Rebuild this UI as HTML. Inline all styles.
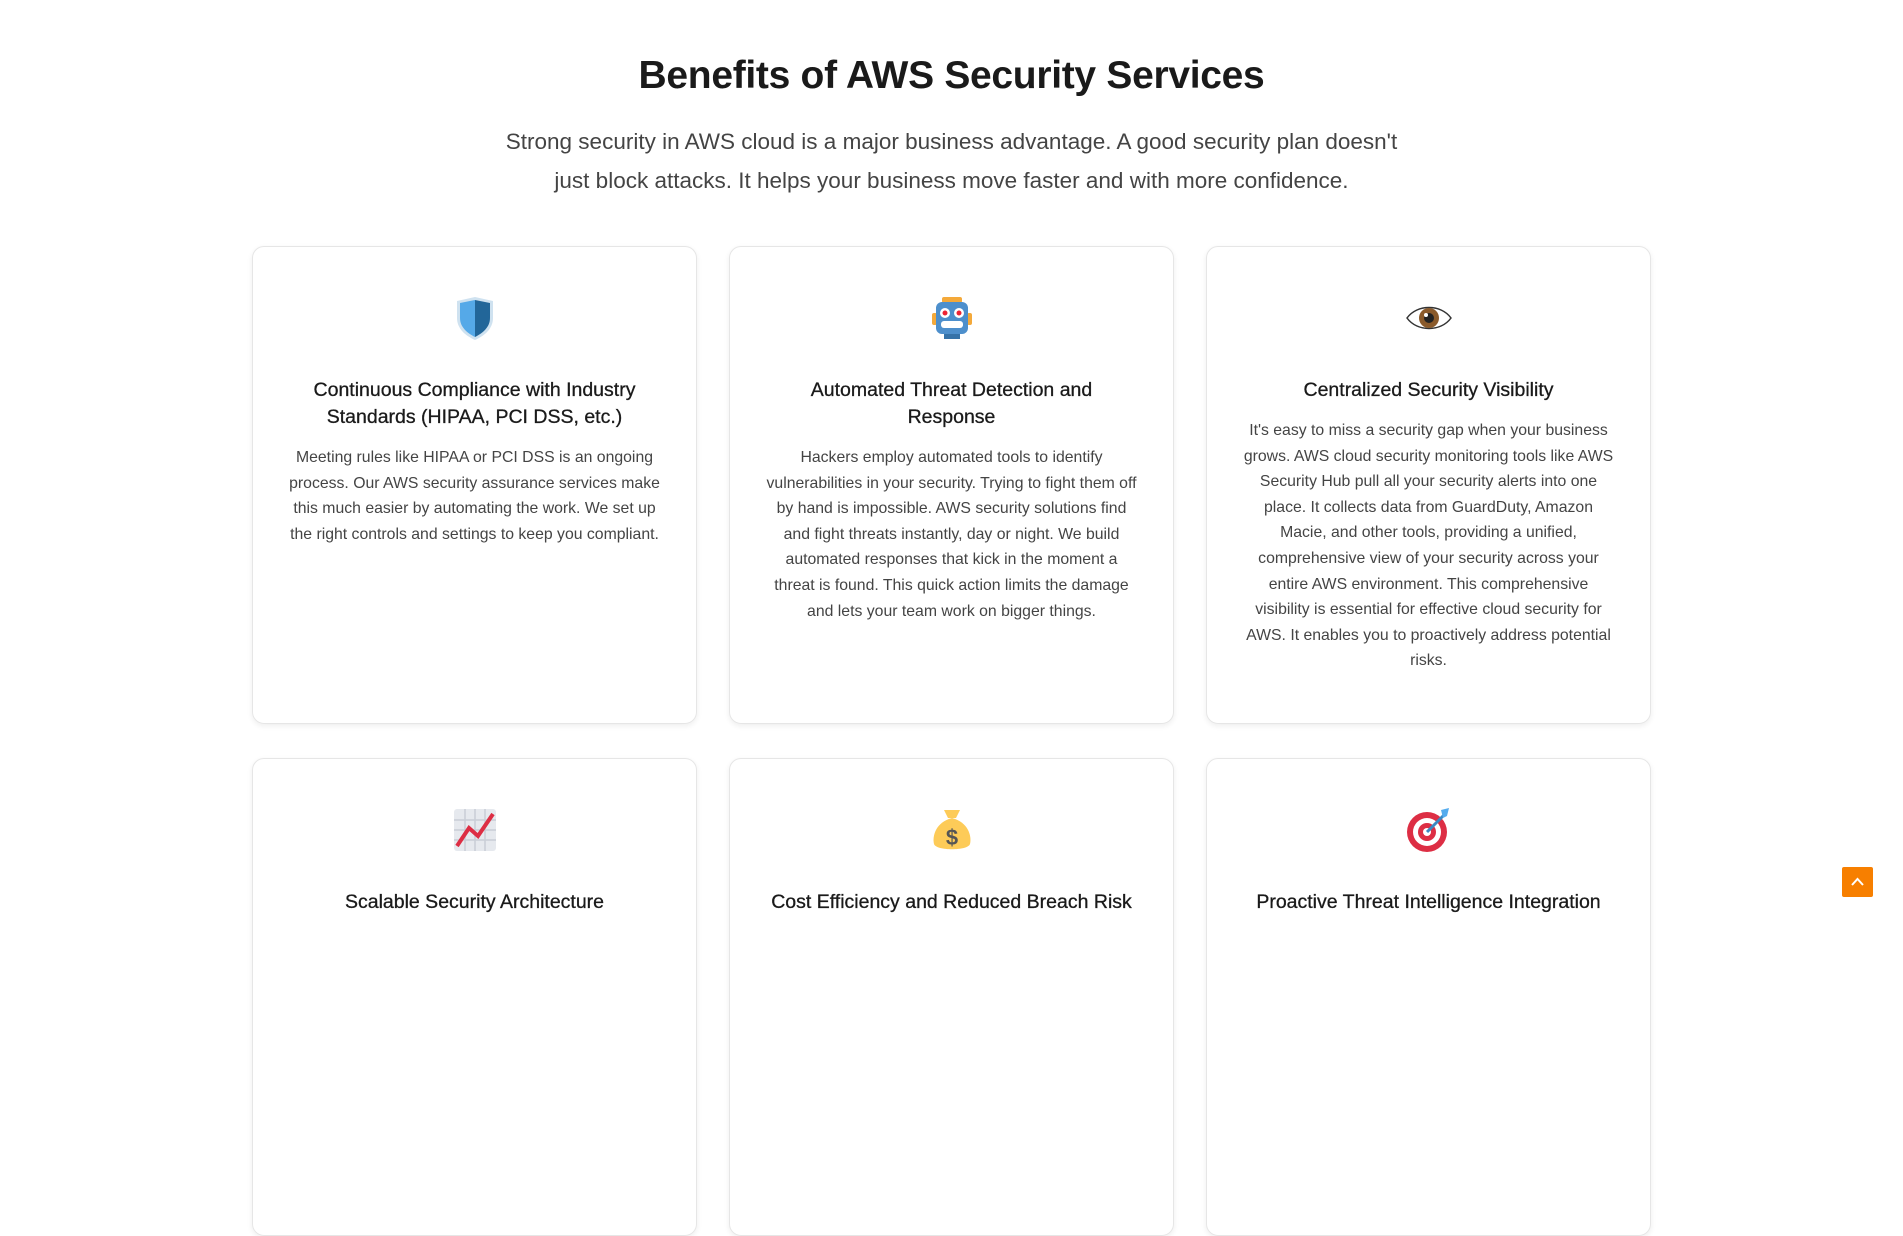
<!DOCTYPE html>
<html><head><meta charset="utf-8"><style>
*{box-sizing:border-box;margin:0;padding:0}
body{width:1903px;height:927px;overflow:hidden;background:#fff;font-family:"Liberation Sans",sans-serif;color:#222;position:relative}
h1{position:absolute;top:54px;left:0;width:1903px;text-align:center;font-size:39px;font-weight:bold;color:#1a1a1a;letter-spacing:-0.3px}
.sub{position:absolute;top:122px;left:490px;width:923px;text-align:center;font-size:22.5px;line-height:39px;color:#444}
.card{position:absolute;width:445px;height:478px;border:1px solid #e6e6e6;border-radius:12px;box-shadow:0 2px 6px rgba(0,0,0,.07);text-align:center;padding:0 34px}
.card svg{position:absolute;top:47px;left:198px;width:48px;height:48px}
.card h3{margin-top:130px;padding:0 16px;font-size:19.5px;line-height:27px;font-weight:normal;color:#1a1a1a;-webkit-text-stroke:0.3px #1a1a1a}
.card p{margin-top:14px;font-size:15.8px;line-height:25.6px;color:#444}
.top{position:absolute;left:1842px;top:867px;width:31px;height:30px;background:#f77f00;border-radius:2px}
</style></head><body>
<h1>Benefits of AWS Security Services</h1>
<div class="sub">Strong security in AWS cloud is a major business advantage. A good security plan doesn't just block attacks. It helps your business move faster and with more confidence.</div>

<div class="card" style="left:252px;top:246px">
<svg viewBox="0 0 48 48"><path d="M24 3 L42 7 V24 C42 35 33 42 24 46 C15 42 6 35 6 24 V7 Z" fill="#cfe2f0"/><path d="M24 6 L9 9 V24 C9 33 16 39 24 43 Z" fill="#55a9e8"/><path d="M24 6 L39 9 V24 C39 33 32 39 24 43 Z" fill="#226699"/></svg>
<h3>Continuous Compliance with Industry Standards (HIPAA, PCI DSS, etc.)</h3>
<p>Meeting rules like HIPAA or PCI DSS is an ongoing process. Our AWS security assurance services make this much easier by automating the work. We set up the right controls and settings to keep you compliant.</p>
</div>

<div class="card" style="left:729px;top:246px">
<svg viewBox="0 0 48 48"><rect x="14" y="3" width="20" height="6" rx="2" fill="#f4a93a"/><rect x="4" y="19" width="5" height="12" rx="2" fill="#f4a93a"/><rect x="39" y="19" width="5" height="12" rx="2" fill="#f4a93a"/><rect x="8" y="8" width="32" height="32" rx="6" fill="#4d8fcc"/><circle cx="17" cy="19" r="5" fill="#fff"/><circle cx="31" cy="19" r="5" fill="#fff"/><circle cx="17" cy="19" r="2.5" fill="#e23"/><circle cx="31" cy="19" r="2.5" fill="#e23"/><rect x="13" y="27" width="22" height="7" rx="3" fill="#fff"/><rect x="16" y="40" width="16" height="5" fill="#3572a8"/></svg>
<h3>Automated Threat Detection and Response</h3>
<p>Hackers employ automated tools to identify vulnerabilities in your security. Trying to fight them off by hand is impossible. AWS security solutions find and fight threats instantly, day or night. We build automated responses that kick in the moment a threat is found. This quick action limits the damage and lets your team work on bigger things.</p>
</div>

<div class="card" style="left:1206px;top:246px">
<svg viewBox="0 0 48 48"><path d="M2 24 C12 10 36 10 46 24 C36 38 12 38 2 24Z" fill="#fff" stroke="#333" stroke-width="1.5"/><circle cx="24" cy="24" r="10" fill="#8a5a2b"/><circle cx="24" cy="24" r="5" fill="#222"/><circle cx="21" cy="21" r="2" fill="#fff"/></svg>
<h3>Centralized Security Visibility</h3>
<p>It's easy to miss a security gap when your business grows. AWS cloud security monitoring tools like AWS Security Hub pull all your security alerts into one place. It collects data from GuardDuty, Amazon Macie, and other tools, providing a unified, comprehensive view of your security across your entire AWS environment. This comprehensive visibility is essential for effective cloud security for AWS. It enables you to proactively address potential risks.</p>
</div>

<div class="card" style="left:252px;top:758px">
<svg viewBox="0 0 48 48"><rect x="3" y="3" width="42" height="42" rx="3" fill="#e6e9ee"/><path d="M3 14H45M3 24H45M3 34H45M14 3V45M24 3V45M34 3V45" stroke="#c9ced6" stroke-width="1.5"/><path d="M6 40 L18 22 L27 30 L42 8" stroke="#dd2e44" stroke-width="4" fill="none"/></svg>
<h3>Scalable Security Architecture</h3>
</div>

<div class="card" style="left:729px;top:758px">
<svg viewBox="0 0 48 48"><path d="M16 4 H32 L28 12 H20Z" fill="#fdcb58"/><path d="M24 12 C8 16 4 30 6 38 C8 45 40 45 42 38 C44 30 40 16 24 12Z" fill="#fdcb58"/><text x="24" y="39" font-size="22" font-family="Liberation Sans" font-weight="bold" text-anchor="middle" fill="#555">$</text></svg>
<h3 style="padding:0">Cost Efficiency and Reduced Breach Risk</h3>
</div>

<div class="card" style="left:1206px;top:758px">
<svg viewBox="0 0 48 48"><circle cx="22" cy="26" r="20" fill="#dd2e44"/><circle cx="22" cy="26" r="14" fill="#fff"/><circle cx="22" cy="26" r="9" fill="#dd2e44"/><circle cx="22" cy="26" r="4" fill="#fff"/><path d="M22 26 L40 8" stroke="#3b88c3" stroke-width="3"/><path d="M36 4 L44 2 L42 10 L38 12 Z" fill="#55acee"/></svg>
<h3 style="padding:0">Proactive Threat Intelligence Integration</h3>
</div>

<div class="top"><svg width="31" height="30" viewBox="0 0 31 30"><path d="M10 18 L15.5 12 L21 18" stroke="#fff" stroke-width="2" fill="none"/></svg></div>
</body></html>
